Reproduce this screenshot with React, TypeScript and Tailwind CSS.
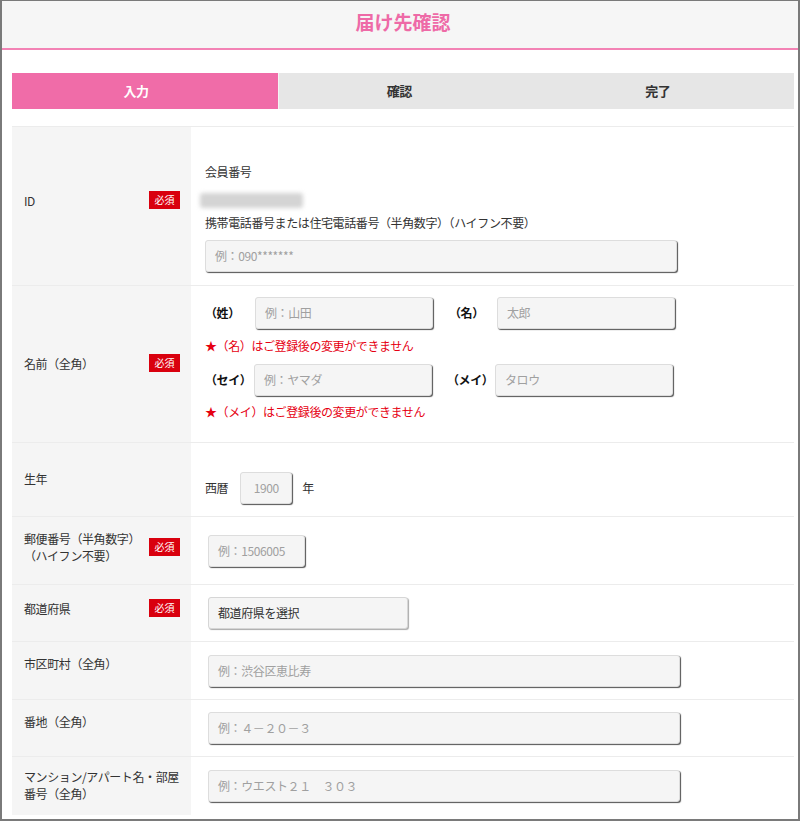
import React from "react";

const font = { fontFamily: '"Noto Sans CJK JP", "Noto Sans", sans-serif' };

function Badge() {
  return (
    <span className="flex h-[18px] w-[31px] shrink-0 items-center justify-center bg-[#d9000e] text-[10px] leading-none tracking-normal text-white">
      必須
    </span>
  );
}

function Field({ w, ph, center = false }: { w: string; ph: string; center?: boolean }) {
  return (
    <div
      className={`${w} flex h-[32px] shrink-0 items-center rounded-[3px] border border-[#dddddd] bg-[#f5f5f5] px-[9px] text-[12px] text-[#a0a0a0] shadow-[1px_1px_1px_#555] ${center ? "justify-center" : ""}`}
    >
      {ph}
    </div>
  );
}

function Row({
  label,
  badge = false,
  labelPt,
  h,
  children,
}: {
  label: React.ReactNode;
  badge?: boolean;
  labelPt: string;
  h: string;
  children: React.ReactNode;
}) {
  return (
    <div className={`flex ${h} border-t border-[#ececec]`}>
      <div className={`flex w-[179px] shrink-0 items-start bg-[#f5f5f5] pl-[12px] pr-[11px] ${labelPt}`}>
        <div className="flex w-full items-center justify-between">
          <div className="whitespace-nowrap text-[12px] leading-[17px] text-[#333]">{label}</div>
          {badge && <Badge />}
        </div>
      </div>
      <div className="flex-1 bg-white">{children}</div>
    </div>
  );
}

export default function App() {
  return (
    <div className="relative h-[821px] w-[800px] overflow-hidden bg-white tracking-[-0.4px]" style={font}>
      <div className="flex h-[50px] items-center justify-center border-b-2 border-[#f383b5] bg-[#f6f6f6] pb-[4px]">
        <h1 className="pl-[6px] text-[19px] font-bold tracking-normal text-[#ee6aa7]">届け先確認</h1>
      </div>

      <div className="ml-[12px] mr-[6px] mt-[23px] flex h-[36px] text-[13px] font-bold">
        <div className="flex w-[266px] items-center justify-center bg-[#f06ca8] pr-[18px] text-white">入力</div>
        <div className="flex flex-1 items-center justify-center border-l border-[#f4f4f4] bg-[#e6e6e6] pr-[18px] text-[#333]">確認</div>
        <div className="flex flex-1 items-center justify-center bg-[#e6e6e6] pr-[16px] text-[#333]">完了</div>
      </div>

      <div className="ml-[12px] mr-[6px] mt-[17px] text-[#333]">
        <Row label="ID" badge labelPt="pt-[64px]" h="h-[159px]">
          <div className="flex flex-col pl-[14px] pt-[36px] text-[12px]">
            <div className="leading-[18px]">会員番号</div>
            <div className="ml-[-5px] mt-[12px] h-[15px] w-[103px] rounded-[3px] bg-[#d4d4d4] blur-[2px]" />
            <div className="mt-[6px] leading-[18px]">携帯電話番号または住宅電話番号（半角数字）（ハイフン不要）</div>
            <div className="mt-[8px]">
              <Field w="w-[472px]" ph="例：090*******" />
            </div>
          </div>
        </Row>

        <Row label="名前（全角）" badge labelPt="pt-[68px]" h="h-[157px]">
          <div className="flex flex-col pl-[14px] pt-[11px] text-[12px]">
            <div className="flex items-center">
              <span className="w-[50px] font-bold text-[#111]">（姓）</span>
              <Field w="w-[178px]" ph="例：山田" />
              <span className="ml-[16px] w-[48px] font-bold text-[#111]">（名）</span>
              <Field w="w-[178px]" ph="太郎" />
            </div>
            <div className="mt-[8px] leading-[18px] text-[#e60012]">★（名）はご登録後の変更ができません</div>
            <div className="mt-[9px] flex items-center">
              <span className="w-[49px] font-bold text-[#111]">（セイ）</span>
              <Field w="w-[178px]" ph="例：ヤマダ" />
              <span className="ml-[15px] w-[48px] font-bold text-[#111]">（メイ）</span>
              <Field w="w-[178px]" ph="タロウ" />
            </div>
            <div className="mt-[7px] leading-[18px] text-[#e60012]">★（メイ）はご登録後の変更ができません</div>
          </div>
        </Row>

        <Row label="生年" labelPt="pt-[27px]" h="h-[74px]">
          <div className="flex items-center pl-[14px] pt-[29px] text-[12px]">
            <span>西暦</span>
            <div className="ml-[12px]">
              <Field w="w-[52px]" ph="1900" center />
            </div>
            <span className="ml-[10px]">年</span>
          </div>
        </Row>

        <Row
          label={
            <>
              郵便番号（半角数字）
              <br />
              （ハイフン不要）
            </>
          }
          badge
          labelPt="pt-[13px]"
          h="h-[68px]"
        >
          <div className="pl-[17px] pt-[18px]">
            <Field w="w-[97px]" ph="例：1506005" />
          </div>
        </Row>

        <Row label="都道府県" badge labelPt="pt-[14px]" h="h-[57px]">
          <div className="pl-[17px] pt-[12px]">
            <div className="flex h-[32px] w-[200px] items-center rounded-[3px] border border-[#d6d6d6] bg-[#f5f5f5] px-[9px] text-[12px] text-[#333] shadow-[1px_1px_1px_#aaa]">
              都道府県を選択
            </div>
          </div>
        </Row>

        <Row label="市区町村（全角）" labelPt="pt-[13px]" h="h-[58px]">
          <div className="pl-[17px] pt-[13px]">
            <Field w="w-[472px]" ph="例：渋谷区恵比寿" />
          </div>
        </Row>

        <Row label="番地（全角）" labelPt="pt-[13px]" h="h-[57px]">
          <div className="pl-[17px] pt-[12px]">
            <Field w="w-[472px]" ph="例：４－２０－３" />
          </div>
        </Row>

        <Row
          label={
            <>
              マンション/アパート名・部屋
              <br />
              番号（全角）
            </>
          }
          labelPt="pt-[11px]"
          h="h-[59px]"
        >
          <div className="pl-[17px] pt-[13px]">
            <Field w="w-[472px]" ph="例：ウエスト２１　３０３" />
          </div>
        </Row>
      </div>

      <div className="pointer-events-none absolute left-0 top-0 h-[821px] w-[800px] border-x-2 border-b-2 border-t border-[#7a7a7a]" />
    </div>
  );
}
